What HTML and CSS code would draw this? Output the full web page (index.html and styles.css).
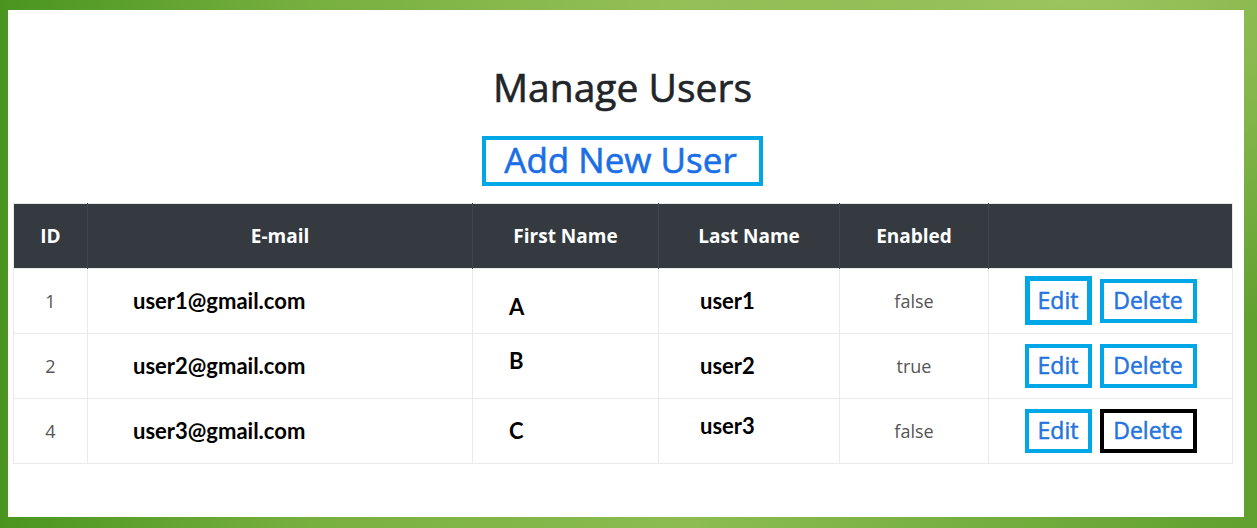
FILE: index.html
```html
<!DOCTYPE html>
<html lang="en">
<head>
<meta charset="utf-8">
<title>Manage Users</title>
<link rel="stylesheet" href="styles.css">
</head>
<body>
<main class="panel">
  <h1 class="title">Manage Users</h1>
  <div class="add-row"><a class="add-link" href="#">Add New User</a></div>
  <table class="users">
    <colgroup>
      <col class="c-id"><col class="c-email"><col class="c-first"><col class="c-last"><col class="c-enabled"><col class="c-actions">
    </colgroup>
    <thead>
      <tr><th>ID</th><th>E-mail</th><th>First Name</th><th>Last Name</th><th>Enabled</th><th></th></tr>
    </thead>
    <tbody>
      <tr>
        <td class="num">1</td>
        <td class="strong email">user1@gmail.com</td>
        <td class="strong first low">A</td>
        <td class="strong last">user1</td>
        <td class="num">false</td>
        <td class="actions"><a class="btn edit tall" href="#">Edit</a><a class="btn delete" href="#">Delete</a></td>
      </tr>
      <tr>
        <td class="num">2</td>
        <td class="strong email">user2@gmail.com</td>
        <td class="strong first high">B</td>
        <td class="strong last">user2</td>
        <td class="num">true</td>
        <td class="actions"><a class="btn edit" href="#">Edit</a><a class="btn delete" href="#">Delete</a></td>
      </tr>
      <tr>
        <td class="num">4</td>
        <td class="strong email">user3@gmail.com</td>
        <td class="strong first">C</td>
        <td class="strong last high">user3</td>
        <td class="num">false</td>
        <td class="actions"><a class="btn edit" href="#">Edit</a><a class="btn delete focused" href="#">Delete</a></td>
      </tr>
    </tbody>
  </table>
</main>
</body>
</html>
```
FILE: styles.css
```css
html, body {
  margin: 0;
  height: 528px;
  overflow: hidden;
}
body {
  background:
    radial-gradient(ellipse at 85% 0%, #9cc45e 0%, rgba(156,196,94,0) 45%),
    linear-gradient(to right, #4a9520 0%, #78b040 25%, #8cbc52 55%, #73ad3f 80%, #5fa02f 100%);
  font-family: "Open Sans", "Liberation Sans", sans-serif;
  padding: 10px 13px 11px 8px;
  box-sizing: border-box;
}
.panel {
  background: #fff;
  height: 507px;
  box-sizing: border-box;
  padding: 54px 12px 0 5px;
}
.title {
  margin: 0;
  text-align: center;
  font-size: 39px;
  line-height: 1.2;
  font-weight: 400;
  color: #212529;
  -webkit-text-stroke: 0.6px #212529;
}
.add-row {
  text-align: center;
  margin-top: 25px;
}
.add-link {
  display: inline-block;
  border: 4px solid #00a7e6;
  padding: 0 22px 2px 18px;
  line-height: 40px;
  font-size: 35px;
  font-weight: 400;
  color: #1a6fe6;
  -webkit-text-stroke: 0.6px #1a6fe6;
  text-decoration: none;
}
.users {
  margin-top: 17px;
  width: 1219px;
  table-layout: fixed;
  border-collapse: collapse;
  border: 1px solid #e6e8ea;
}
.c-id { width: 74px; }
.c-email { width: 385px; }
.c-first { width: 186px; }
.c-last { width: 181px; }
.c-enabled { width: 149px; }
.c-actions { width: 244px; }
.users thead tr { height: 65px; }
.users tbody tr { height: 65px; }
.users th {
  background: #343a40;
  color: #fff;
  font-weight: 700;
  font-size: 19px;
  padding: 0;
  border-left: 1px solid #40464d;
  text-align: center;
  vertical-align: middle;
}
.users th:first-child { border-left: none; }
.users td {
  padding: 0;
  border: 1px solid #e8eaec;
  vertical-align: middle;
}
.num {
  text-align: center;
  color: #555;
  font-size: 18px;
}
.strong {
  font-family: "Lato", "Liberation Sans", sans-serif;
  font-weight: 700;
  font-size: 22px;
  color: #000;
}
.email { padding-left: 45px !important; }
.first { padding-left: 36px !important; }
.last { padding-left: 41px !important; }
.low { padding-top: 12px !important; }
.high { padding-bottom: 10px !important; }
.actions {
  text-align: center;
  font-size: 0;
}
.btn {
  display: inline-block;
  box-sizing: border-box;
  height: 44px;
  border: 4px solid #00a7e6;
  font-size: 23px;
  font-weight: 400;
  line-height: 34px;
  color: #2574e0;
  -webkit-text-stroke: 0.5px #2574e0;
  text-decoration: none;
  vertical-align: middle;
}
.edit { width: 67px; margin-right: 8px; }
.tall { height: 49px; line-height: 39px; border-width: 5px; }
.delete { width: 97px; }
.focused { border-color: #000; }
```
